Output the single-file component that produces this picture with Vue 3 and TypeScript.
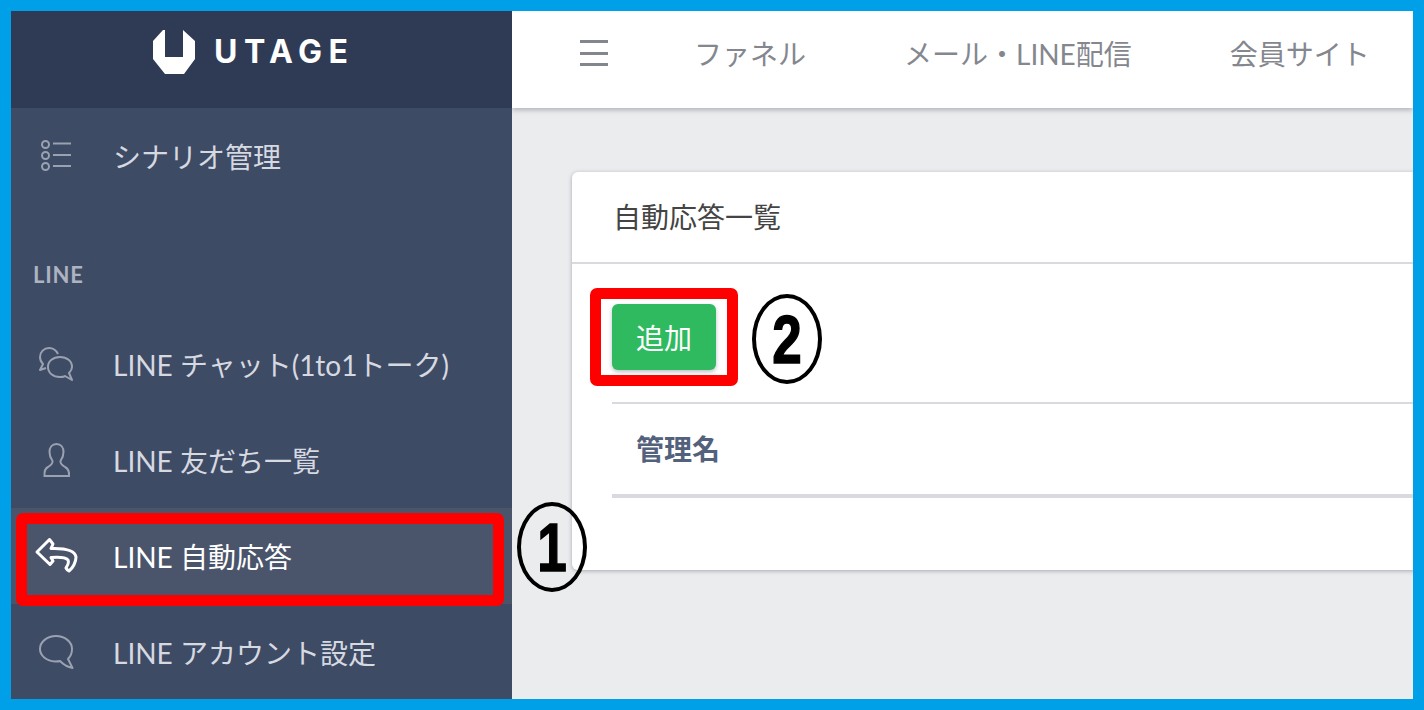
<script setup lang="ts">
const topLinks: string[] = ['ファネル', 'メール・LINE配信', '会員サイト']
</script>

<template>
  <div class="frame">
    <aside class="sidebar">
      <div class="brand">
        <svg class="logo" viewBox="0 0 42 46" width="42" height="46">
          <path d="M10 1 L0 12 L0 30 L12 45 L31 45 L42 30 L42 12 L30 1 L30 28 L12 28 L12 1 Z" fill="#fff" />
        </svg>
        <span class="brand-name">UTAGE</span>
      </div>
      <nav class="nav">
        <a class="row">
          <svg class="ico" viewBox="0 0 36 36" fill="none" stroke="#9aa2b1" stroke-width="2">
            <circle cx="6.5" cy="6.5" r="3.5" /><circle cx="6.5" cy="17.5" r="3.5" /><circle cx="6.5" cy="28.5" r="3.5" />
            <path d="M14 5.5H32M14 17H32M14 28H32" />
          </svg>
          <span>シナリオ管理</span>
        </a>
        <div class="section">LINE</div>
        <a class="row">
          <svg class="ico" viewBox="0 0 36 36" fill="none" stroke="#9aa2b1" stroke-width="2" stroke-linejoin="round">
            <path d="M19 8 C17 4 13 2 10 2 C5 2 1 6 1 11 C1 14 2 16 4 18 L1 24 L7 22" />
            <path d="M21 11 C14 11 9 15 9 21 C9 27 14 31 21 31 C23 31 25 31 26 30 L33 34 L30 27 C32 25 33 23 33 21 C33 15 28 11 21 11 Z" />
          </svg>
          <span>LINE チャット(1to1トーク)</span>
        </a>
        <a class="row">
          <svg class="ico" viewBox="0 0 36 36" fill="none" stroke="#9aa2b1" stroke-width="2">
            <path d="M17.5 2 C13 2 10.5 5.5 10.5 10 C10.5 14 12 17 13.5 19 C14 22 12 23 9 25 C7 26 5 28 5.5 34 L30 34 C30.5 28 28 26 26 25 C23 23 21 22 21.5 19 C23 17 24.5 14 24.5 10 C24.5 5.5 22 2 17.5 2 Z" />
          </svg>
          <span>LINE 友だち一覧</span>
        </a>
        <a class="row active">
          <svg class="ico ico-over" viewBox="0 0 36 36" fill="none" stroke="#fff" stroke-width="3" stroke-linejoin="round">
            <path d="M10.5 1.5 L-2 14 L11 26.5 L14 23 L12 19.5 C18 19 26 18.5 29 22 C30.5 25 28 28 27 30 C28 32 30 33 30 33 C34 30 37 24 37 19 C36 13 29 10 12 10.5 L14 6 Z" />
          </svg>
          <span>LINE 自動応答</span>
        </a>
        <a class="row">
          <svg class="ico" viewBox="0 0 36 36" fill="none" stroke="#9aa2b1" stroke-width="2" stroke-linejoin="round">
            <path d="M17 2 C8 2 1 8 1 15 C1 22 8 27 16 27.5 C18 27.5 20 27.5 21 27 C24 30 28 33 33.5 34 L29 25 C32 22 33 19 33 15 C33 8 26 2 17 2 Z" />
          </svg>
          <span>LINE アカウント設定</span>
        </a>
      </nav>
    </aside>

    <div class="content">
      <header class="topbar">
        <div class="burger"><i></i><i></i><i></i></div>
        <a v-for="link in topLinks" :key="link" class="top-link">{{ link }}</a>
      </header>
      <main class="main">
        <section class="card">
          <div class="card-head">自動応答一覧</div>
          <div class="card-body">
            <button class="add">追加</button>
            <div class="table-head">管理名</div>
          </div>
        </section>
      </main>
    </div>

    <div class="mark mark-nav"></div>
    <div class="mark mark-add"></div>
    <div class="num num-1"><span>1</span></div>
    <div class="num num-2"><span>2</span></div>
  </div>
</template>

<style>
html, body { margin: 0; padding: 0; background: #00a0e9; }
</style>

<style scoped>
.frame {
  position: relative;
  box-sizing: border-box;
  width: 1424px;
  height: 710px;
  border: 11px solid #00a0e9;
  display: flex;
  overflow: hidden;
  font-family: Lato, "Noto Sans CJK JP", sans-serif;
  background: #ebecee;
}
.sidebar {
  width: 501px;
  flex: none;
  background: #3e4b65;
  position: relative;
  z-index: 2;
}
.brand {
  height: 97px;
  background: #2f3b55;
  display: flex;
  align-items: flex-start;
  padding: 18px 0 0 142px;
  box-sizing: border-box;
  gap: 19px;
}
.logo { flex: none; }
.brand-name {
  color: #fff;
  font-family: Inter, sans-serif;
  font-weight: 700;
  font-size: 32px;
  line-height: 46px;
  letter-spacing: 6.5px;
}
.row {
  display: flex;
  align-items: center;
  height: 96px;
  padding-left: 28px;
  color: #d6d9e0;
  font-size: 28px;
  font-weight: 400;
}
.row.active { background: #4a556c; color: #fff; }
.ico { width: 36px; height: 36px; flex: none; margin-right: 38px; }
.ico-over { overflow: visible; }
.section {
  height: 112px;
  box-sizing: border-box;
  padding: 58px 0 0 22px;
  color: #aeb3c0;
  font-size: 22px;
  font-weight: 700;
  line-height: 26px;
  letter-spacing: 0.8px;
}
.content { flex: 1; min-width: 0; display: flex; flex-direction: column; }
.topbar {
  height: 97px;
  flex: none;
  background: #fff;
  display: flex;
  align-items: center;
  padding: 0 0 13px 68px;
  box-sizing: border-box;
  box-shadow: 0 2px 5px rgba(60, 70, 90, 0.35);
  position: relative;
  z-index: 1;
  gap: 98px;
}
.burger { width: 28px; display: flex; flex-direction: column; gap: 8.5px; margin-right: -12px; }
.burger i { display: block; height: 3px; background: #84868e; }
.top-link { color: #85878f; font-size: 28px; white-space: nowrap; }
.main { flex: 1; padding: 64px 0 0 60px; min-height: 0; }
.card {
  background: #fff;
  width: 900px;
  height: 398px;
  border-radius: 6px;
  box-shadow: 0 1px 4px rgba(60, 70, 90, 0.4);
}
.card-head {
  height: 92px;
  box-sizing: border-box;
  border-bottom: 2px solid #d8dade;
  padding-left: 41px;
  line-height: 91px;
  font-size: 28px;
  color: #444;
}
.card-body { padding: 40px 0 0 40px; }
.add {
  display: block;
  width: 104px;
  height: 66px;
  border: 0;
  padding: 0;
  border-radius: 6px;
  background: #2fba5f;
  color: #fff;
  font: inherit;
  font-size: 28px;
  box-shadow: 0 2px 4px rgba(60, 70, 90, 0.35);
}
.table-head {
  margin-top: 32px;
  height: 96px;
  box-sizing: border-box;
  border-top: 2px solid #d8dade;
  border-bottom: 4px solid #d8dade;
  padding-left: 24px;
  line-height: 90px;
  color: #53617c;
  font-size: 28px;
  font-weight: 700;
}
.mark {
  position: absolute;
  z-index: 3;
  box-sizing: border-box;
  border: 11px solid #f00;
  border-radius: 7px;
}
.mark-nav { left: 5px; top: 502px; width: 488px; height: 93px; }
.mark-add { left: 579px; top: 277px; width: 148px; height: 98px; }
.num {
  position: absolute;
  z-index: 4;
  box-sizing: border-box;
  width: 70px;
  height: 90px;
  border: 4px solid #000;
  border-radius: 50%;
  color: #000;
  font-family: "Liberation Sans", sans-serif;
  font-weight: 700;
  font-size: 68px;
  line-height: 82px;
  text-align: center;
  -webkit-text-stroke: 1.5px #000;
}
.num span { display: block; transform: scaleX(0.78); }
.num-1 { left: 506px; top: 491px; }
.num-2 { left: 741px; top: 283px; }
</style>
